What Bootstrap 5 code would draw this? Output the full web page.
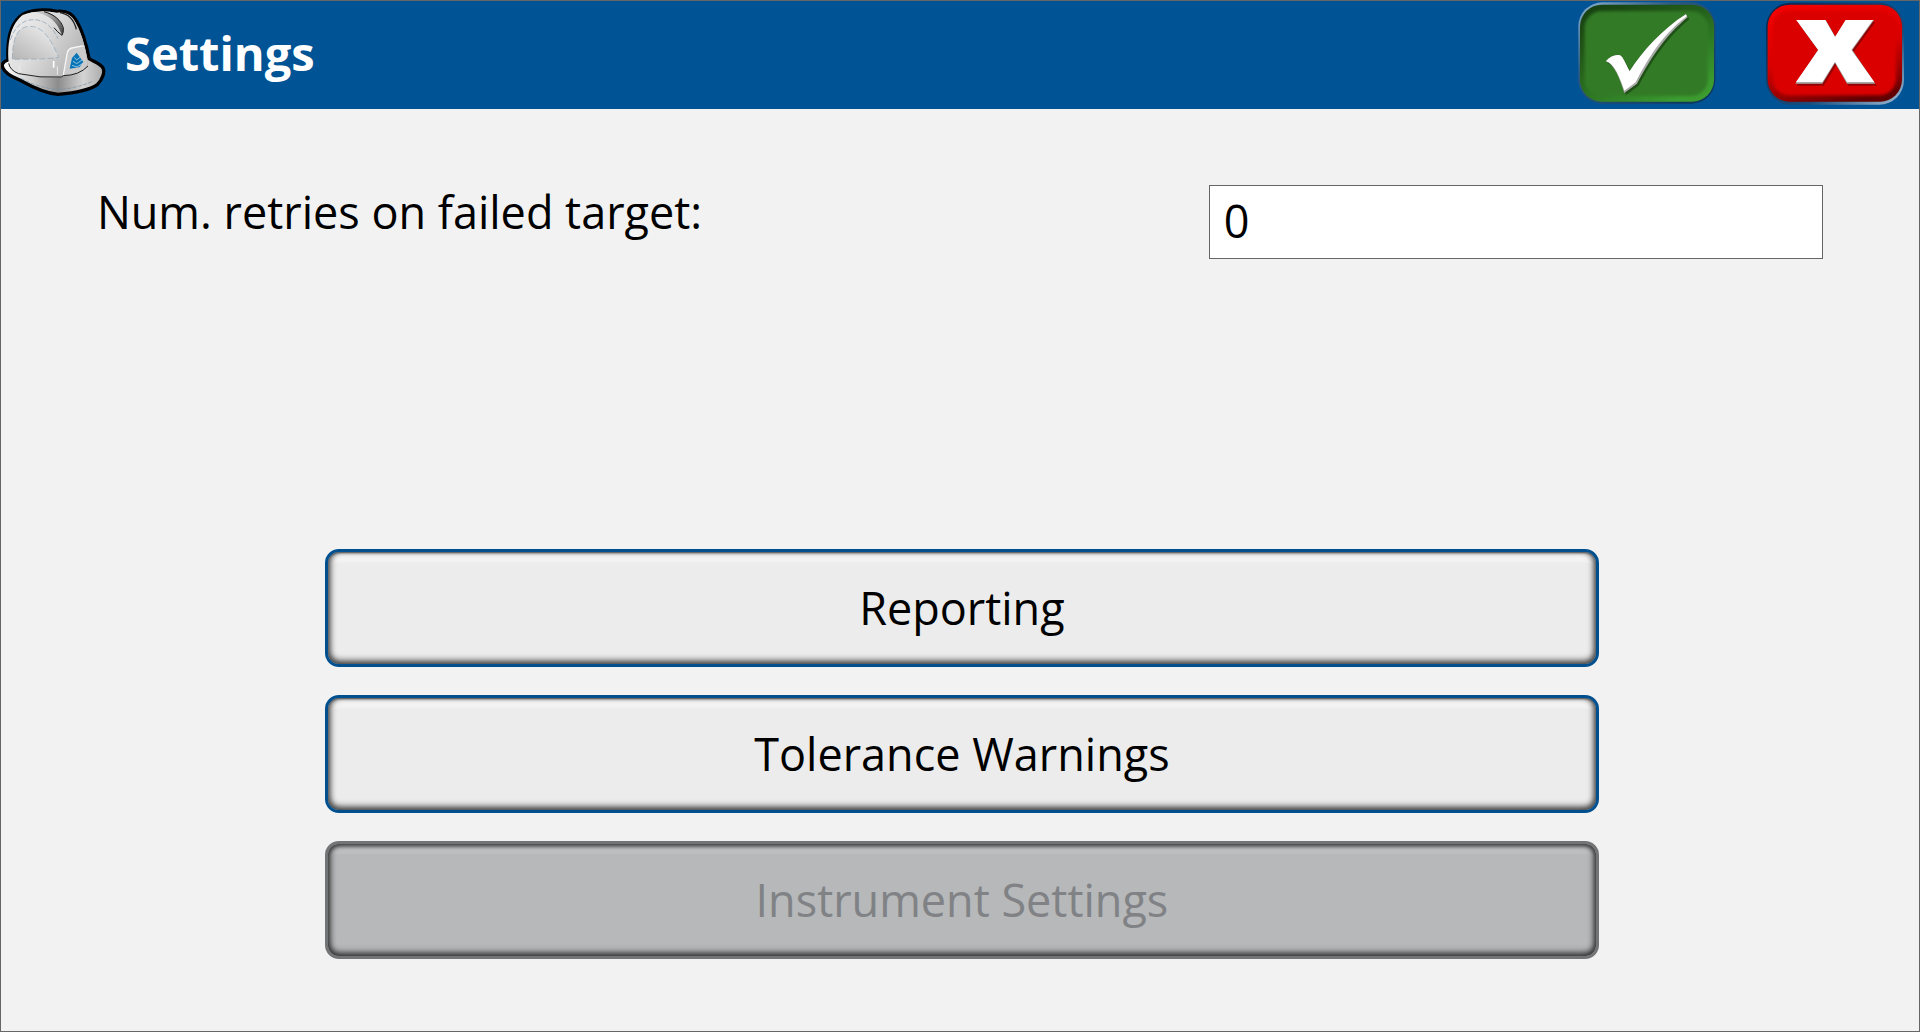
<!DOCTYPE html>
<html lang="en">
<head>
<meta charset="utf-8">
<meta name="viewport" content="width=device-width, initial-scale=1">
<title>Settings</title>
<link href="https://cdn.jsdelivr.net/npm/bootstrap@5.3.0/dist/css/bootstrap.min.css" rel="stylesheet">
<style>
  body { font-family: "Open Sans", "Noto Sans", sans-serif; background: #f2f2f2; color: #000; }
  .app-window { border: 1px solid #666; }
  .title-bar { background: #005395; height: 108px; padding-right: 14px; }
  .title-bar h1 { font-size: 47px; line-height: 60px; margin-left: 16px; padding-bottom: 4px; }
  .title-actions { gap: 48px; padding-bottom: 4px; }
  .icon-btn { border: 0; background: none; padding: 0; line-height: 0; }
  .retries-row { padding: 76px 5% 0; }
  .retries-row label { font-size: 45px; line-height: 54px; }
  .retries-field { width: 32vw; }
  .retries-field .form-control { height: 74px; border: 1px solid #666; border-radius: 0; background: #fff; color: #000; font-size: 45px; line-height: 54px; padding: 0 14px 4px; }
  .menu-stack { gap: 28px; padding: 48px 16.7% 72px 16.9%; }
  .menu-btn { --bs-btn-color: #000; --bs-btn-bg: #ececec; --bs-btn-border-color: #00508f;
    --bs-btn-hover-color: #000; --bs-btn-hover-bg: #f4f4f4; --bs-btn-hover-border-color: #00508f;
    --bs-btn-disabled-color: #808285; --bs-btn-disabled-bg: #b6b8ba; --bs-btn-disabled-border-color: #737476; --bs-btn-disabled-opacity: 1;
    height: 118px; border-width: 3px; border-radius: 14px; font-size: 45px; line-height: 54px; padding: 0 16px;
    box-shadow: inset 0 -4px 7px -1px #444, inset 4px 0 6px -2px #555, inset -4px 0 6px -2px #555, inset 0 2px 2px -1px #555, inset 0 11px 2px -1px #f3f3f3; }
  .menu-btn:disabled { box-shadow: inset 0 -4px 7px -1px #333, inset 4px 0 6px -2px #444, inset -4px 0 6px -2px #444, inset 0 3px 4px -1px #444, inset 0 11px 2px -1px #bdbfc1; }
</style>
</head>
<body>
<div class="app-window d-flex flex-column min-vh-100">
  <header class="title-bar d-flex align-items-center">
    <svg width="108" height="108" viewBox="3 3 324 324" aria-hidden="true">
      <defs>
        <linearGradient id="shell" x1="0" y1="0" x2="1" y2=".5"><stop offset="0" stop-color="#eee"/><stop offset=".45" stop-color="#e0e0e0"/><stop offset="1" stop-color="#b4b4b4"/></linearGradient>
        <linearGradient id="panel" x1="0" y1="1" x2=".9" y2="0"><stop offset="0" stop-color="#b4b4b4"/><stop offset="1" stop-color="#efefef"/></linearGradient>
        <linearGradient id="brim" x1="0" y1="0" x2="1" y2="0"><stop offset="0" stop-color="#fff"/><stop offset=".3" stop-color="#ccc"/><stop offset=".55" stop-color="#8c8c8c"/><stop offset=".8" stop-color="#d4d4d4"/><stop offset="1" stop-color="#aaa"/></linearGradient>
        <linearGradient id="ridge" x1="0" y1="0" x2="1" y2="1"><stop offset="0" stop-color="#ddd"/><stop offset="1" stop-color="#444"/></linearGradient>
      </defs>
      <path d="M24 180C6 186 4 196 10 206C20 226 44 232 66 244C100 263 138 281 174 283C222 279 268 271 292 254C308 238 315 216 309 204C303 192 280 184 267 176C260 138 247 92 229 62C216 38 196 31 171 34C138 27 95 28 68 43C34 66 20 110 24 180Z" fill="url(#brim)" stroke="#000" stroke-width="10" stroke-linejoin="round"/>
      <path d="M26 186C20 116 38 68 68 45C95 32 138 32 170 38C198 35 216 45 229 72C246 104 256 143 265 190C261 204 249 212 240 216C226 224 208 229 190 228L186 232C138 233 90 229 56 221C37 214 29 207 26 186Z" fill="url(#shell)"/>
      <path d="M37 178C38 120 48 90 76 81C116 72 145 98 176 172C132 179 85 177 37 178Z" fill="url(#panel)" stroke="#8fa5b5" stroke-width="2" stroke-dasharray="18 7"/>
      <path d="M31 120C45 76 75 54 112 60C145 67 160 87 174 116" fill="none" stroke="#8198ad" stroke-width="2" stroke-dasharray="15 6"/>
      <path d="M105 38C138 41 163 58 175 82L186 104C194 92 187 75 178 63C168 48 145 36 130 34Z" fill="url(#ridge)"/>
      <path d="M132 35C163 43 184 62 190 84Q191 98 186 106Q172 96 162 83" fill="none" stroke="#111" stroke-width="3"/>
      <path d="M180 38C207 42 222 60 229 88" fill="none" stroke="#222" stroke-width="4"/>
      <path d="M57 195Q57 207 64 216M172 199V224" fill="none" stroke="#eee" stroke-width="3"/>
      <path d="M161 183V203" fill="none" stroke="#fff" stroke-width="5"/>
      <path d="M190 225L202 157Q206 146 216 144L253 137L263 188Q260 204 243 213Q222 225 190 225Z" fill="#cbcbcb"/>
      <path d="M190 225L202 157Q206 146 216 144L251 137" fill="none" stroke="#f6f6f6" stroke-width="4"/>
      <path d="M26 190Q30 211 56 221Q120 235 184 231L190 227Q238 226 264 198" fill="none" stroke="#222" stroke-width="3"/>
      <path d="M64 235Q110 262 170 268Q225 267 275 245" fill="none" stroke="#7890a5" stroke-width="2" stroke-dasharray="12 4"/>
      <path d="M230 158L250 186L238 202L209 206L216 174Z" fill="#0875b8"/>
      <path d="M223 172L230 180L240 172M219 184L230 191L246 180M216 196L231 201L248 190" fill="none" stroke="#d8e7ef" stroke-width="2"/>
    </svg>
    <h1 class="fw-bold text-white mb-0">Settings</h1>
    <div class="title-actions d-flex ms-auto">
      <button type="button" class="icon-btn" aria-label="Accept">
        <svg width="140" height="104" viewBox="51 3 420 312" aria-hidden="true">
          <defs>
            <linearGradient id="okRim" x1="0" y1="0" x2="1" y2="1"><stop offset="0" stop-color="#8ab0d0"/><stop offset=".35" stop-color="#2d5a80"/><stop offset="1" stop-color="#0a3158"/></linearGradient>
            <linearGradient id="okEdge" x1="0" y1="0" x2=".7" y2="1"><stop offset="0" stop-color="#153c10"/><stop offset=".45" stop-color="#245f1b"/><stop offset="1" stop-color="#3c9c2f"/></linearGradient>
            <filter id="soften" x="-10%" y="-10%" width="120%" height="120%"><feGaussianBlur stdDeviation="5"/></filter>
          </defs>
          <rect x="55" y="7" width="411" height="304" rx="72" fill="url(#okRim)"/>
          <rect x="60" y="14" width="402" height="291" rx="66" fill="url(#okEdge)"/>
          <rect x="74" y="34" width="370" height="254" rx="50" fill="#307a25" filter="url(#soften)"/>
          <path d="M138 184C150 170 166 163 180 166C190 172 195 188 209 214C246 156 307 87 378 43L383 52C320 105 280 160 231 251L193 279C180 238 164 194 138 184Z" fill="#17400f" opacity=".7" transform="translate(5 6)"/>
          <path d="M138 184C150 170 166 163 180 166C190 172 195 188 209 214C246 156 307 87 378 43L383 52C320 105 280 160 231 251L193 279C180 238 164 194 138 184Z" fill="#aaa"/>
          <path d="M138 183C150 170 166 163 180 166C190 172 195 188 209 214C246 156 307 87 378 43L380 49C315 99 276 153 227 247L193 272C180 234 164 191 138 183Z" fill="#fff"/>
        </svg>
      </button>
      <button type="button" class="icon-btn" aria-label="Cancel">
        <svg width="140" height="104" viewBox="615 3 420 312" aria-hidden="true">
          <defs>
            <linearGradient id="noRim" x1="0" y1="0" x2="1" y2="1"><stop offset="0" stop-color="#06264c"/><stop offset=".65" stop-color="#1c4c7a"/><stop offset="1" stop-color="#a3bed6"/></linearGradient>
            <linearGradient id="noEdge" x1=".3" y1="0" x2=".6" y2="1"><stop offset="0" stop-color="#f20000"/><stop offset=".5" stop-color="#d80000"/><stop offset=".85" stop-color="#900000"/><stop offset="1" stop-color="#600000"/></linearGradient>
          </defs>
          <rect x="618" y="8" width="414" height="306" rx="74" fill="url(#noRim)"/>
          <rect x="623" y="14" width="403" height="291" rx="66" fill="url(#noEdge)"/>
          <rect x="638" y="32" width="370" height="254" rx="50" fill="#da0000" filter="url(#soften)"/>
          <path d="M709 60H797L826 110L857 60H942L877 150L946 251H861L825 189L787 251H706L774 150Z" fill="#700000" opacity=".65" transform="translate(4 6)"/>
          <path d="M709 60H797L826 110L857 60H942L877 150L946 251H861L825 189L787 251H706L774 150Z" fill="#aaa"/>
          <path d="M709 60H796L825 111L857 60H939L874 150L943 246H861L825 185L787 246H708L775 150Z" fill="#fff"/>
        </svg>
      </button>
    </div>
  </header>
  <main class="d-flex flex-column flex-grow-1">
    <div class="retries-row d-flex justify-content-between align-items-start">
      <label for="retries">Num. retries on failed target:</label>
      <div class="retries-field"><input id="retries" class="form-control" type="text" inputmode="numeric" value="0"></div>
    </div>
    <div class="menu-stack d-flex flex-column mt-auto">
      <button type="button" class="btn menu-btn">Reporting</button>
      <button type="button" class="btn menu-btn">Tolerance Warnings</button>
      <button type="button" class="btn menu-btn" disabled>Instrument Settings</button>
    </div>
  </main>
</div>
<script src="https://cdn.jsdelivr.net/npm/bootstrap@5.3.0/dist/js/bootstrap.bundle.min.js"></script>
</body>
</html>
